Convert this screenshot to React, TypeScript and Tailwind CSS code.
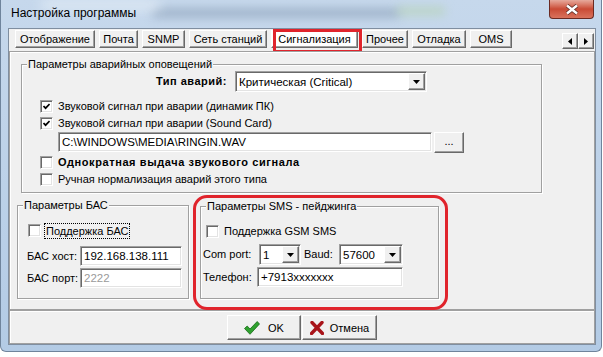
import React from "react";

const raised =
  "border border-t-white border-l-white border-r-[#696969] border-b-[#696969] shadow-[inset_-1px_-1px_0_#a0a0a0]";
const sunken =
  "border border-t-[#a0a0a0] border-l-[#a0a0a0] border-r-white border-b-white shadow-[inset_1px_1px_0_#696969,inset_-1px_-1px_0_#e3e3e3]";

function Box({ checked }: { checked?: boolean }) {
  return (
    <span className={`flex h-[13px] w-[13px] shrink-0 items-center justify-center bg-white ${sunken}`}>
      {checked && (
        <svg width="7" height="7" viewBox="0 0 7 7">
          <path d="M0.5 3 L2.6 5.2 L6.6 1" fill="none" stroke="#000" strokeWidth="1.7" />
        </svg>
      )}
    </span>
  );
}

function Check({ label, checked, bold }: { label: string; checked?: boolean; bold?: boolean }) {
  return (
    <div className="flex h-[17px] items-center gap-[5px] ml-[18px]">
      <Box checked={checked} />
      <span className={bold ? "font-bold tracking-[0.6px]" : ""}>{label}</span>
    </div>
  );
}

function Arrow() {
  return (
    <svg width="7" height="4" viewBox="0 0 7 4">
      <path d="M0 0 H7 L3.5 4 Z" fill="#000" />
    </svg>
  );
}

function Combo({ value, className }: { value: string; className: string }) {
  return (
    <div className={`flex h-[21px] shrink-0 bg-white ${sunken} ${className}`}>
      <span className="flex flex-1 items-center pl-[3px] pt-[1px] text-[11.5px] whitespace-nowrap overflow-hidden">{value}</span>
      <span className={`m-[1px] flex w-[17px] items-center justify-center bg-[#f0f0f0] ${raised}`}>
        <Arrow />
      </span>
    </div>
  );
}

function Edit({ value, className, disabled }: { value: string; className: string; disabled?: boolean }) {
  return (
    <div
      className={`flex h-[20px] shrink-0 items-center bg-white pl-[3px] pt-[1px] text-[11.5px] ${sunken} ${className} ${
        disabled ? "text-[#9a9a9a]" : ""
      }`}
    >
      {value}
    </div>
  );
}

function Group({ title, className, children }: { title: string; className: string; children: React.ReactNode }) {
  return (
    <div className={`relative flex flex-col border border-[#a0a0a0] shadow-[inset_1px_1px_0_#fff,1px_1px_0_#fff] ${className}`}>
      <span className="absolute -top-[7px] left-[5px] bg-[#f0f0f0] px-[1px] leading-[13px] whitespace-nowrap">{title}</span>
      {children}
    </div>
  );
}

const tabs: [string, string][] = [
  ["Отображение", "w-[80px]"],
  ["Почта", "w-[39px]"],
  ["SNMP", "w-[43px]"],
  ["Сеть станций", "w-[78px]"],
  ["Сигнализация", "w-[87px]"],
  ["Прочее", "w-[46px]"],
  ["Отладка", "w-[54px]"],
  ["OMS", "w-[42px]"],
];

export default function App() {
  return (
    <div className="h-[357px] w-[603px] overflow-hidden bg-white text-[11px] leading-[13px] text-black font-['Liberation_Sans',Arial,sans-serif]">
      <div className="flex h-[352px] w-[602px] flex-col rounded-b-[6px] border-x border-b border-[#6f849c] bg-linear-to-b from-[#c6d8ec] to-[#b3cbe5]">
        {/* title bar */}
        <div className="relative flex h-[28px] shrink-0 overflow-hidden">
          <div className="absolute left-[150px] top-[8px] h-[10px] w-[250px] rounded-full bg-[#7f94ad] opacity-50 blur-[5px]" />
          <div className="absolute left-[395px] top-[6px] h-[10px] w-[50px] rounded-full bg-[#b6d3b4] opacity-60 blur-[5px]" />
          <div className="absolute left-[40px] top-[0px] h-[10px] w-[120px] rounded-full bg-[#e4edf6] opacity-80 blur-[6px]" />
          <span className="relative flex items-center pl-[10px] pb-[1px] text-[12px]">
            Настройка программы
          </span>
          <div className="relative ml-auto mr-[7px] flex h-[19px] w-[45px] items-center justify-center rounded-b-[4px] border border-t-0 border-[#6b2a22] bg-linear-to-b from-[#e6a99c] via-[#c94a35] to-[#d9725c]">
            <svg width="14" height="11" viewBox="0 0 14 11">
              <path d="M2 1.5 L12 9.5 M12 1.5 L2 9.5" stroke="#5a2a24" strokeWidth="4" />
              <path d="M2 1.5 L12 9.5 M12 1.5 L2 9.5" stroke="#fff" strokeWidth="2.4" />
            </svg>
          </div>
        </div>

        <div className="flex flex-1 pl-[7px] pr-[5px] pb-[6px]">
          {/* client */}
          <div className="flex flex-1 flex-col border border-[#7f8ea0] bg-[#f0f0f0]">
            {/* tab row */}
            <div className="flex h-[22px] shrink-0 items-start gap-[4px] pl-[6px] pt-[1px]">
              {tabs.map(([label, w]) => {
                const active = label === "Сигнализация";
                return (
                  <div
                    key={label}
                    className={`relative flex h-[18px] items-center justify-center pt-[1px] whitespace-nowrap ${w} ${raised} ${
                      active ? "bg-white" : "bg-[#f0f0f0]"
                    }`}
                  >
                    {label}
                    {active && (
                      <div className="absolute left-[1px] -top-[2px] h-[24px] w-[89px] border-[3px] border-[#e0242c]" />
                    )}
                  </div>
                );
              })}
              <div className="ml-auto mr-[1px] mt-[3px] flex">
                <span className={`flex h-[16px] w-[16px] items-center justify-center ${raised}`}>
                  <svg width="4" height="7" viewBox="0 0 4 7">
                    <path d="M4 0 V7 L0 3.5 Z" fill="#000" />
                  </svg>
                </span>
                <span className={`flex h-[16px] w-[16px] items-center justify-center ${raised}`}>
                  <svg width="4" height="7" viewBox="0 0 4 7">
                    <path d="M0 0 V7 L4 3.5 Z" fill="#000" />
                  </svg>
                </span>
              </div>
            </div>

            {/* tab page */}
            <div className="relative flex h-[259px] shrink-0 flex-col border border-[#a0a0a0] shadow-[inset_1px_1px_0_#fff]">
              <Group title="Параметры аварийных оповещений" className="ml-[11px] mt-[12px] h-[129px] w-[521px]">
                <div className="mt-[6px] flex h-[21px] items-center">
                  <span className="w-[205px] text-right font-bold tracking-[0.5px]">Тип аварий:</span>
                  <Combo value="Критическая (Critical)" className="ml-[8px] w-[192px]" />
                </div>
                <div className="mt-[6px]">
                  <Check label="Звуковой сигнал при аварии (динамик ПК)" checked />
                </div>
                <Check label="Звуковой сигнал при аварии (Sound Card)" checked />
                <div className="flex h-[21px] items-start">
                  <Edit value="C:\WINDOWS\MEDIA\RINGIN.WAV" className="ml-[36px] w-[374px]" />
                  <div className={`ml-[2px] flex h-[21px] w-[30px] items-center justify-center pb-[3px] ${raised}`}>...</div>
                </div>
                <div className="mt-[1px]">
                  <Check label="Однократная выдача звукового сигнала" bold />
                </div>
                <Check label="Ручная нормализация аварий этого типа" />
              </Group>

              <div className="mt-[12px] flex items-start">
                <Group title="Параметры БАС" className="ml-[7px] h-[94px] w-[172px]">
                  <div className="ml-[10px] mt-[16px] flex h-[17px] items-center gap-[3px]">
                    <Box />
                    <span className="flex h-[16px] items-center border border-dotted border-black px-[1px] pt-[1px]">
                      Поддержка БАС
                    </span>
                  </div>
                  <div className="ml-[9px] mt-[7px] flex items-center">
                    <span className="w-[53px]">БАС хост:</span>
                    <Edit value="192.168.138.111" className="w-[102px]" />
                  </div>
                  <div className="ml-[9px] mt-[2px] flex items-center">
                    <span className="w-[53px]">БАС порт:</span>
                    <Edit value="2222" className="w-[102px]" disabled />
                  </div>
                </Group>

                <Group title="Параметры SMS - пейджинга" className="ml-[11px] mt-[1px] h-[93px] w-[239px]">
                  <div className="ml-[5px] mt-[16px] flex h-[17px] items-center gap-[5px]">
                    <Box />
                    <span>Поддержка GSM SMS</span>
                  </div>
                  <div className="ml-[2px] mt-[4px] flex items-center">
                    <span className="w-[56px]">Com port:</span>
                    <Combo value="1" className="w-[42px]" />
                    <span className="ml-[3px] w-[35px]">Baud:</span>
                    <Combo value="57600" className="w-[64px]" />
                  </div>
                  <div className="ml-[2px] mt-[2px] flex items-center">
                    <span className="w-[54px]">Телефон:</span>
                    <Edit value="+7913xxxxxxx" className="w-[146px]" />
                  </div>
                </Group>
              </div>

              {/* red annotation */}
              <div className="absolute left-[183px] top-[143px] z-10 h-[115px] w-[255px] rounded-[14px] border-[3px] border-[#e0242c]" />
            </div>

            {/* buttons */}
            <div className="flex flex-1 justify-center gap-[1px] border border-[#a0a0a0] pt-[4px] shadow-[inset_1px_1px_0_#fff]">
              <div className={`flex h-[25px] w-[74px] items-center justify-center gap-[8px] ${raised}`}>
                <svg width="16" height="14" viewBox="0 0 16 14">
                  <path d="M0.5 7.5 L3.2 5 L6 8 L13.2 0.5 L15.5 3 L6 13.3 Z" fill="#2fa12f" stroke="#156b15" strokeWidth="0.8" />
                </svg>
                <span className="pt-[1px]">OK</span>
              </div>
              <div className={`flex h-[25px] w-[75px] items-center justify-center gap-[6px] ${raised}`}>
                <svg width="14" height="14" viewBox="0 0 14 14">
                  <path d="M2 1.5 L12.5 12.5 M12 1.5 L1.5 12.5" stroke="#a8141a" strokeWidth="3.4" strokeLinecap="round" />
                </svg>
                <span className="pt-[1px]">Отмена</span>
              </div>
            </div>
          </div>
        </div>
      </div>
    </div>
  );
}
